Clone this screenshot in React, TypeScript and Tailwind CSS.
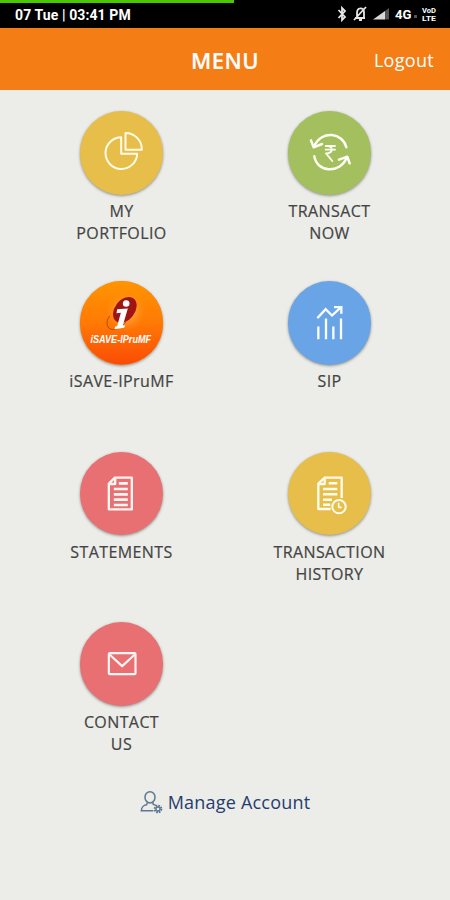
import type { ReactNode } from "react";

const sans = "font-['Open_Sans','Noto_Sans',sans-serif]";

function PieIcon() {
  return (
    <svg viewBox="58.5 33 250.5 250.5" className="size-full" fill="none" stroke="#fffbe9" strokeWidth="6" strokeLinejoin="round">
      <path d="M182 112A47.500 47.500 0 1 0 230 161H182Z" />
      <path d="M195 99V149H244A49 49 0 0 0 195 99Z" />
    </svg>
  );
}

function TransactIcon() {
  return (
    <svg viewBox="54 33 250.5 250.5" className="size-full" fill="none" stroke="#fdfff5" strokeWidth="7.500" strokeLinecap="round" strokeLinejoin="round">
      <path d="M229 142C219 99 156 88 132 139" />
      <path d="M123 121L131 142L156 132" />
      <path d="M133 169C141 217 209 224 231 172" />
      <path d="M207 179L232 170L239 190" />
      <path d="M167 138H195M167 149H195M170 138C190 136 191 160 168 160L187 183" strokeWidth="5.500" />
    </svg>
  );
}

function SaveLogo() {
  return (
    <svg viewBox="58.5 34.5 250.5 250.5" className="size-full">
      <defs>
        <linearGradient id="saveGround" x1="0" y1="0" x2="0" y2="1">
          <stop offset="0" stopColor="#ff9500" />
          <stop offset="0.5" stopColor="#ff7a05" />
          <stop offset="1" stopColor="#fb4b05" />
        </linearGradient>
        <radialGradient id="saveGlow">
          <stop offset="0" stopColor="#ffc477" stopOpacity="0.9" />
          <stop offset="1" stopColor="#ff9a30" stopOpacity="0" />
        </radialGradient>
      </defs>
      <circle cx="183.700" cy="159.700" r="125" fill="url(#saveGround)" />
      <ellipse cx="196" cy="126" rx="58" ry="58" fill="url(#saveGlow)" />
      <ellipse cx="193" cy="121" rx="43" ry="30" transform="rotate(-52 193 121)" fill="#9e1512" />
      <path d="M148 139C133 157 139 180 157 180C170 180 186 170 196 157" fill="none" stroke="#b44a12" strokeWidth="3" />
      <circle cx="197" cy="102" r="10" fill="#fff" />
      <path d="M170 119L202 117L187 168L194 167L191 175L162 179L164 171L170 170L181 130L168 131Z" fill="#fff" />
      <text x="90" y="220" textLength="182" lengthAdjust="spacingAndGlyphs" fill="#fff" className="font-['Liberation_Sans_Narrow','Liberation_Sans',sans-serif] text-[33px] font-bold italic">iSAVE-IPruMF</text>
    </svg>
  );
}

function SipIcon() {
  return (
    <svg viewBox="54 34.5 250.5 250.5" className="size-full" fill="none" stroke="#fafdff" strokeWidth="7">
      <path d="M145 171V209M168 147V209M190 171V209M213 147V209" />
      <path d="M142 146L167 119L186 138L211 115" />
      <path d="M192 113H214V133" />
    </svg>
  );
}

function StatementIcon() {
  return (
    <svg viewBox="58.5 36 250.5 250.5" className="size-full" fill="none" stroke="#fff6f4" strokeWidth="7" strokeLinejoin="round">
      <path d="M163 113H214V208H145V131ZM164 114V132H146" />
      <path d="M175 130H202M160 147H202M160 163H202M160 179H202M160 195H202" strokeWidth="8" />
    </svg>
  );
}

function HistoryIcon() {
  return (
    <svg viewBox="84 36 250.5 250.5" className="size-full" fill="none" stroke="#fffbed" strokeWidth="7" strokeLinejoin="round">
      <path d="M245 174V113H194L175 131V207H212M194 114V132H176" />
      <path d="M206 130H232M189 147H232M189 163H232M189 179H216M189 194H211" strokeWidth="7.500" />
      <circle cx="237" cy="200" r="20" strokeWidth="6" />
      <path d="M236 188V202H245" strokeWidth="5" />
    </svg>
  );
}

function MailIcon() {
  return (
    <svg viewBox="58.5 37.5 250.5 250.5" className="size-full" fill="none" stroke="#fff5f3" strokeWidth="6.500" strokeLinejoin="round">
      <rect x="145" y="131" width="80" height="63" rx="3" />
      <path d="M147 135L185 170L223 135" />
    </svg>
  );
}

type Item = { lines: string[]; color: string; icon: ReactNode };

const items: Item[] = [
  { lines: ["MY", "PORTFOLIO"], color: "bg-[#e6be49]", icon: <PieIcon /> },
  { lines: ["TRANSACT", "NOW"], color: "bg-[#a3bf5e]", icon: <TransactIcon /> },
  { lines: ["iSAVE-IPruMF"], color: "bg-[#ff7a05]", icon: <SaveLogo /> },
  { lines: ["SIP"], color: "bg-[#69a4e6]", icon: <SipIcon /> },
  { lines: ["STATEMENTS"], color: "bg-[#e87072]", icon: <StatementIcon /> },
  { lines: ["TRANSACTION", "HISTORY"], color: "bg-[#e6be49]", icon: <HistoryIcon /> },
  { lines: ["CONTACT", "US"], color: "bg-[#e87072]", icon: <MailIcon /> },
];

function StatusBar() {
  return (
    <div className="h-[27.500px] bg-black">
      <div className="h-[3px] w-[234px] bg-[#4ac800]" />
      <div className="flex h-[24.500px] items-center pr-[13px] pl-[15px] font-[Roboto,sans-serif] text-white">
        <span className="text-[14px] leading-none font-bold tracking-[0.1px]">07 Tue | 03:41 PM</span>
        <svg viewBox="0 0 100 20" className="-mt-0.5 ml-auto h-5 w-[100px]" fill="none" stroke="#e7e7e7">
          <path d="M1.500 6L8 13L5 16V4L8 7L1.500 14" strokeWidth="1.800" />
          <path d="M18 14H28M20 13V9C20 3 27 3 27 8V14M22 16H25M17 16L29 3" strokeWidth="1.800" />
          <path d="M36 15.500L48 7V15.500Z" fill="#d8d8d8" stroke="none" />
          <path d="M48 7L52 4V15.500H48Z" fill="#555" stroke="none" />
          <text x="58" y="15" textLength="16.500" lengthAdjust="spacingAndGlyphs" fill="#fff" stroke="none" className="text-[12.500px] font-bold">4G</text>
          <path d="M77 11H80V14H77Z" fill="#555" stroke="none" />
          <text x="85" y="8.500" textLength="14" lengthAdjust="spacingAndGlyphs" fill="#fff" stroke="none" className="text-[6.500px] font-bold">VoD</text>
          <text x="85" y="17" textLength="14" lengthAdjust="spacingAndGlyphs" fill="#fff" stroke="none" className="text-[8px] font-bold">LTE</text>
        </svg>
      </div>
    </div>
  );
}

function MenuItem({ item }: { item: Item }) {
  return (
    <div className="flex flex-col items-center">
      <div className={`size-[83.5px] shrink-0 overflow-hidden rounded-full shadow-[0_1px_3px_rgba(0,0,0,0.4)] ${item.color}`}>{item.icon}</div>
      <div className="mt-[5.500px] text-center text-[16px] leading-[22px] font-normal tracking-[0.4px] text-[#444] [-webkit-text-stroke:0.2px_#444]">
        {item.lines.map((line) => (
          <div key={line}>{line}</div>
        ))}
      </div>
    </div>
  );
}

export default function App() {
  return (
    <div className={`h-[900px] w-[450px] overflow-hidden bg-[#ecede8] ${sans}`}>
      <StatusBar />
      <header className="grid h-[62.500px] grid-cols-3 items-center bg-[#f47d16] text-white">
        <h1 className="col-start-2 pt-0.5 text-center text-[22px] leading-[30px] font-semibold tracking-[0.5px] [-webkit-text-stroke:0.2px_white]">MENU</h1>
        <span className="pt-0.5 pr-4 text-right text-[18px] leading-[26px] tracking-[0.3px]">Logout</span>
      </header>
      <main className="ml-[17.500px] grid grid-cols-[208px_208px] auto-rows-[170.400px] pt-[21px]">
        {items.map((item) => (
          <MenuItem key={item.lines[0]} item={item} />
        ))}
      </main>
      <div className="-mt-[3.500px] flex items-center justify-center">
        <svg viewBox="30 28 72 75" className="mr-1 h-[25px] w-6" fill="none" stroke="#5e7691" strokeWidth="4.500">
          <ellipse cx="60" cy="50" rx="15" ry="17" />
          <path d="M52 65L50 72C39 74 35 78 34 90H70M68 65L70 71L78 74" />
          <circle cx="84" cy="85" r="10" strokeWidth="6" strokeDasharray="5 2.800" />
          <circle cx="84" cy="85" r="6" strokeWidth="4" />
        </svg>
        <span className="text-[18px] leading-[26px] tracking-[0.2px] text-[#263c70]">Manage Account</span>
      </div>
    </div>
  );
}
